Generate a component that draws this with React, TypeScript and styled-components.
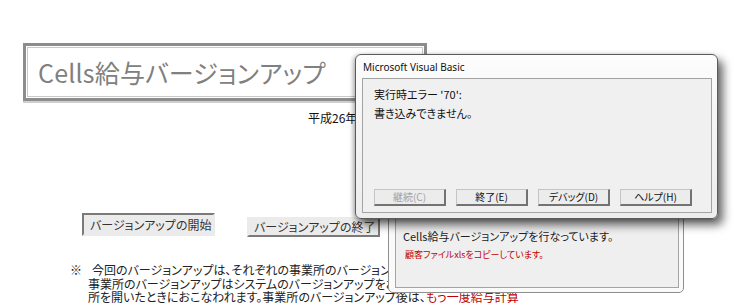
import React from "react";
import styled, { createGlobalStyle } from "styled-components";

const Global = createGlobalStyle`
  html, body { margin: 0; padding: 0; background: #ffffff; }
  body { width: 753px; height: 303px; overflow: hidden; }
  * { box-sizing: border-box; }
`;

const JP = `"Noto Sans CJK JP", "Noto Sans", sans-serif`;

const Page = styled.div`
  position: relative;
  width: 753px;
  height: 303px;
  overflow: hidden;
  padding: 43px 0 0 23px;
  font-family: ${JP};
  font-feature-settings: "palt";
  color: #111;
`;

const TitleBox = styled.div`
  width: 404px;
  height: 58px;
  border: 3px solid #8c8c8c;
  box-shadow: inset 0 0 0 1px #ffffff, inset 0 0 0 2px #c9c9c9, 0 2px 0 #cfcfcf;
  display: flex;
  align-items: center;
  padding-left: 12px;
  font-size: 25px;
  color: #808080;
  letter-spacing: 0.2px;
  white-space: nowrap;
`;

const DateLine = styled.div`
  margin-top: 10px;
  padding-left: 285px;
  font-size: 12px;
  line-height: 14px;
  white-space: nowrap;
`;

const ButtonRow = styled.div`
  margin-top: 88px;
  padding-left: 59px;
  display: flex;
  align-items: flex-start;
  gap: 32px;
`;

const PageButton = styled.div<{ $pressed?: boolean }>`
  width: 133px;
  height: ${(p) => (p.$pressed ? 23 : 20)}px;
  margin-top: ${(p) => (p.$pressed ? 0 : 4)}px;
  background: #ebebeb;
  border-style: solid;
  border-color: ${(p) =>
    p.$pressed ? "#7a7a7a #ebebeb #ebebeb #7a7a7a" : "#ebebeb #7a7a7a #7a7a7a #ebebeb"};
  border-width: 2px;
  font-size: 12px;
  line-height: ${(p) => (p.$pressed ? 19 : 16)}px;
  padding-left: ${(p) => (p.$pressed ? 6 : 5)}px;
  color: #333;
  white-space: nowrap;
`;

const Note = styled.div`
  margin-top: 26px;
  padding-left: 47px;
  display: flex;
  font-size: 12px;
  line-height: 13.5px;
  color: #222;
`;

const Mark = styled.div`
  width: 18px;
  flex: none;
`;

const NoteBody = styled.div`
  display: flex;
  flex-direction: column;
`;

const NoteLine = styled.div<{ $indent?: number }>`
  white-space: nowrap;
  padding-left: ${(p) => p.$indent ?? 0}px;
`;

const Red = styled.span`
  color: #c00000;
`;

/* ---------- VB error dialog ---------- */

const ErrorWindow = styled.div`
  position: absolute;
  left: 355px;
  top: 54px;
  width: 363px;
  height: 165px;
  z-index: 3;
  border: 1px solid #5a5a5a;
  border-radius: 6px;
  background: linear-gradient(180deg, #fdfdfd 0%, #f5f5f5 40%, #ededed 100%);
  box-shadow: 5px 6px 10px rgba(0, 0, 0, 0.6), -2px 1px 4px rgba(0, 0, 0, 0.25);
  display: flex;
  flex-direction: column;
  padding: 0 5px 5px 6px;
`;

const WindowTitle = styled.div`
  height: 23px;
  flex: none;
  display: flex;
  align-items: center;
  padding-left: 1px;
  font-family: "Noto Sans", "Liberation Sans", sans-serif;
  font-size: 10px;
  color: #111;
`;

const Client = styled.div`
  flex: 1;
  background: #f0f0f0;
  border: 1px solid #a3a3a3;
  padding: 8px 0 0 11px;
  display: flex;
  flex-direction: column;
`;

const Message = styled.div`
  font-size: 11px;
  line-height: 14px;
  height: 19px;
  color: #111;
  white-space: nowrap;
`;

const DialogButtons = styled.div`
  margin-top: auto;
  margin-bottom: 6px;
  display: flex;
  gap: 10px;
`;

const DialogButton = styled.div<{ $disabled?: boolean }>`
  width: 72px;
  height: 17px;
  background: #ececec;
  border-style: solid;
  border-width: 1px 2px 2px 1px;
  border-color: #c4c4c4 #737373 #737373 #c4c4c4;
  font-size: 10px;
  line-height: 14px;
  text-align: center;
  color: ${(p) => (p.$disabled ? "#a3a3a3" : "#111")};
  white-space: nowrap;
`;

/* ---------- progress dialog ---------- */

const ProgressWindow = styled.div`
  position: absolute;
  left: 388px;
  top: 195px;
  width: 296px;
  height: 98px;
  z-index: 2;
  border: 1px solid #8e8e8e;
  border-radius: 0 0 5px 5px;
  background: #fafafa;
  padding: 0 4px 4px 6px;
  display: flex;
`;

const ProgressPanel = styled.div`
  flex: 1;
  background: #efefef;
  border: 1px solid #a4a4a4;
  padding: 32px 0 0 7px;
  display: flex;
  flex-direction: column;
`;

const ProgressText = styled.div`
  font-size: 11px;
  line-height: 15px;
  color: #222;
  white-space: nowrap;
`;

const ProgressSub = styled.div`
  margin-top: 5px;
  padding-left: 2px;
  font-size: 9px;
  line-height: 12px;
  color: #c00000;
  white-space: nowrap;
`;

export default function App() {
  return (
    <>
      <Global />
      <Page>
        <TitleBox>Cells給与バージョンアップ</TitleBox>
        <DateLine>平成26年10月1日</DateLine>
        <ButtonRow>
          <PageButton $pressed>バージョンアップの開始</PageButton>
          <PageButton>バージョンアップの終了</PageButton>
        </ButtonRow>
        <Note>
          <Mark>※</Mark>
          <NoteBody>
            <NoteLine $indent={4}>
              今回のバージョンアップは、それぞれの事業所のバージョンアップを行います。
            </NoteLine>
            <NoteLine>
              事業所のバージョンアップはシステムのバージョンアップをおこなった後、事業
            </NoteLine>
            <NoteLine>
              所を開いたときにおこなわれます。事業所のバージョンアップ後は、
              <Red>もう一度給与計算</Red>
            </NoteLine>
          </NoteBody>
        </Note>

        <ProgressWindow>
          <ProgressPanel>
            <ProgressText>Cells給与バージョンアップを行なっています。</ProgressText>
            <ProgressSub>顧客ファイルxlsをコピーしています。</ProgressSub>
          </ProgressPanel>
        </ProgressWindow>

        <ErrorWindow>
          <WindowTitle>Microsoft Visual Basic</WindowTitle>
          <Client>
            <Message>実行時エラー '70':</Message>
            <Message>書き込みできません。</Message>
            <DialogButtons>
              <DialogButton $disabled>継続(C)</DialogButton>
              <DialogButton>終了(E)</DialogButton>
              <DialogButton>デバッグ(D)</DialogButton>
              <DialogButton>ヘルプ(H)</DialogButton>
            </DialogButtons>
          </Client>
        </ErrorWindow>
      </Page>
    </>
  );
}
